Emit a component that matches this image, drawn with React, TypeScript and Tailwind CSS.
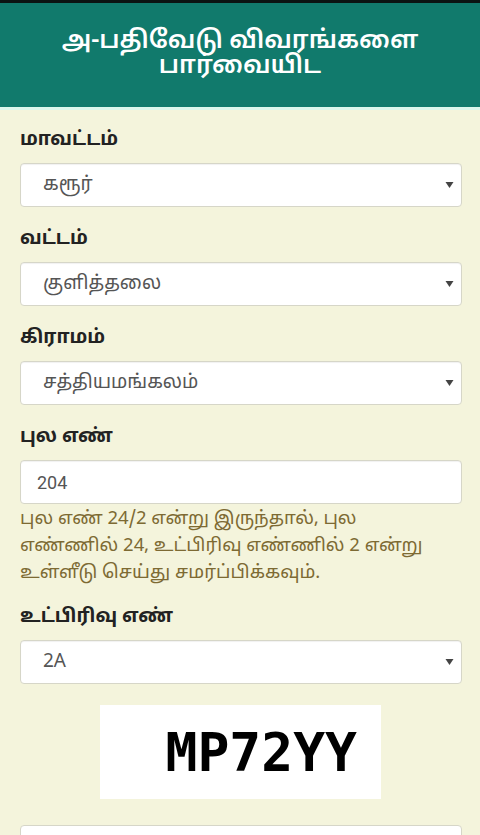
const tamil = "font-['Noto_Sans_Tamil','Lohit_Tamil','Noto_Sans',Roboto,sans-serif]";

const Caret = () => (
    <svg width="9" height="8" viewBox="0 0 9 8" className="shrink-0">
        <path d="M0.5 1 L8.5 1 L4.5 7 Z" fill="#444" />
    </svg>
);

const SelectBox = ({ value }: { value: string }) => (
    <div className="h-[44px] bg-white border border-[#d6d6c8] rounded-[4px] shadow-[inset_0_1px_1px_rgba(0,0,0,0.06)] flex items-center justify-between pl-[22px] pr-[7px]">
        <span className={`text-[19px] text-[#555] ${tamil}`}>{value}</span>
        <Caret />
    </div>
);

const Label = ({ children }: { children: React.ReactNode }) => (
    <div className={`text-[19px] font-bold text-[#222] leading-[26px] mb-[10px] ${tamil}`}>{children}</div>
);

export default function App() {
    return (
        <div className="w-[480px] h-[835px] overflow-hidden bg-[#f4f4dc] font-['Roboto','Liberation_Sans',sans-serif]">
            <div className="h-[3px] bg-[#0b1412]" />
            <div className={`h-[104px] bg-[#117a6c] flex flex-col items-center justify-center text-center text-white text-[25px] font-semibold ${tamil}`}>
                <div className="leading-[27px] mt-[-3px]">அ-பதிவேடு விவரங்களை</div>
                <div className="leading-[24px]">பார்வையிட</div>
            </div>
            <div className="h-[3px] bg-[#dcf7ec]" />

            <div className="pl-[20px] pr-[18px] pt-[17px]">
                <Label>மாவட்டம்</Label>
                <SelectBox value="கரூர்" />

                <div className="mt-[19px]">
                    <Label>வட்டம்</Label>
                    <SelectBox value="குளித்தலை" />
                </div>

                <div className="mt-[19px]">
                    <Label>கிராமம்</Label>
                    <SelectBox value="சத்தியமங்கலம்" />
                </div>

                <div className="mt-[19px]">
                    <Label>புல எண்</Label>
                    <div className="h-[44px] bg-white border border-[#d6d6c8] rounded-[4px] shadow-[inset_0_1px_1px_rgba(0,0,0,0.06)] flex items-center px-[16px]">
                        <span className="text-[18px] text-[#555]">204</span>
                    </div>
                    <p className={`mt-[2px] text-[18.5px] leading-[27px] text-[#7d6a33] ${tamil}`}>
                        புல எண் 24/2 என்று இருந்தால், புல
                        <br />
                        எண்ணில் 24, உட்பிரிவு எண்ணில் 2 என்று
                        <br />
                        உள்ளீடு செய்து சமர்ப்பிக்கவும்.
                    </p>
                </div>

                <div className="mt-[17px]">
                    <Label>உட்பிரிவு எண்</Label>
                    <SelectBox value="2A" />
                </div>

                <div className="mt-[21px] flex justify-center">
                    <div className="w-[281px] h-[94px] bg-white flex items-center pl-[66px] ml-[-2px]">
                        <span className="font-['DejaVu_Sans_Mono',monospace] font-bold text-[53px] leading-none text-black">MP72YY</span>
                    </div>
                </div>

                <div className="mt-[26px] h-[44px] bg-white border border-[#d6d6c8] rounded-[4px]" />
            </div>
        </div>
    );
}
